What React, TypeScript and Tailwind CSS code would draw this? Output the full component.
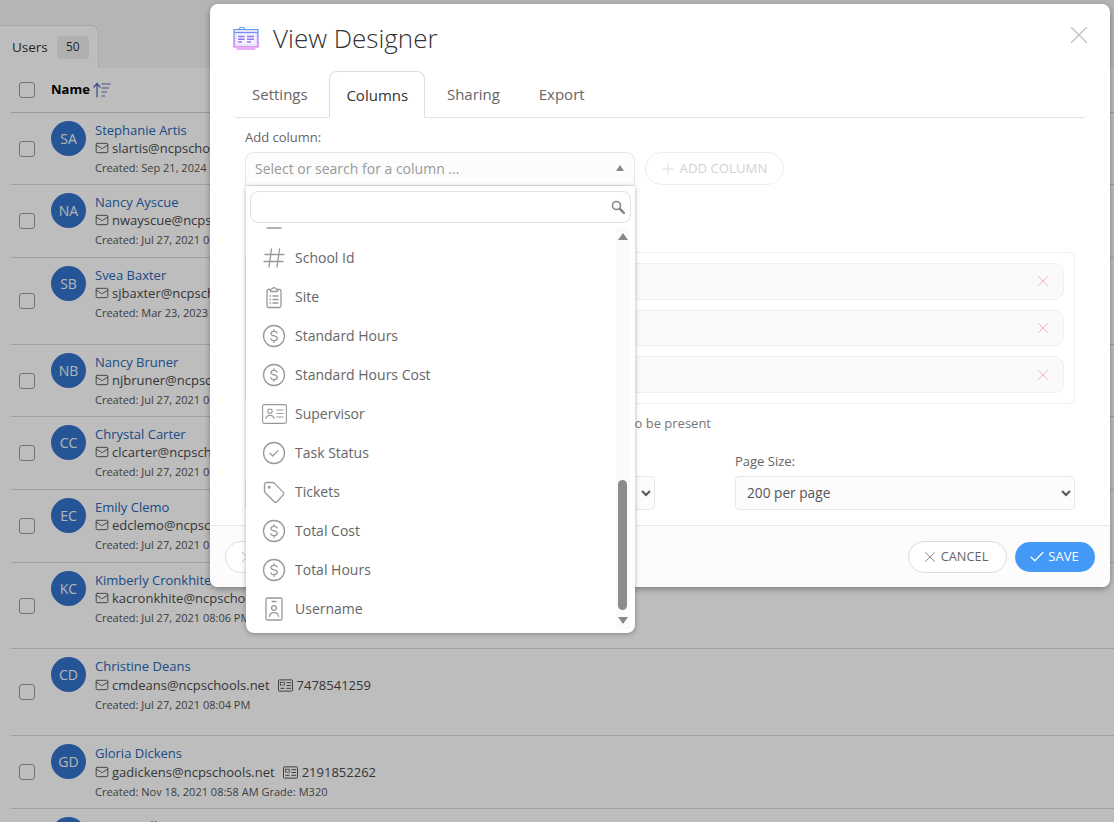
import { useId } from "react";
import { Check, Mail, Plus, X } from "lucide-react";

// ─── Line icons ──────────────────────────────────────────────────────────────

function Ico({ children, className = "" }: { children: React.ReactNode; className?: string }) {
  return (
    <svg
      viewBox="0 0 24 24"
      fill="none"
      stroke="currentColor"
      strokeWidth="1.3"
      strokeLinecap="round"
      strokeLinejoin="round"
      className={`h-6 w-6 text-[#999] ${className}`}
    >
      {children}
    </svg>
  );
}

const HashIcon = () => (
  <Ico>
    <path d="M9.5 3 7 21M17.5 3 15 21M3 8.5h19M2 15.5h19" />
  </Ico>
);

const ClipboardIcon = () => (
  <Ico>
    <path d="M8.5 4.5H6.5a1.5 1.5 0 0 0-1.5 1.5v15a1.5 1.5 0 0 0 1.5 1.5h11a1.5 1.5 0 0 0 1.5-1.5V6a1.5 1.5 0 0 0-1.5-1.5h-2" />
    <path d="M8.5 6.5v-2l2-.8a1.6 1.6 0 0 1 3 0l2 .8v2z" />
    <path d="M11 11h5M11 14.5h5M11 18h5M8 11h.4M8 14.5h.4M8 18h.4" />
  </Ico>
);

const DollarIcon = () => (
  <Ico>
    <circle cx="12" cy="12" r="10.5" />
    <path d="M15.2 9c-.5-1.1-1.7-1.7-3.2-1.7-1.8 0-3.1.9-3.1 2.3 0 3.2 6.4 1.5 6.4 4.7 0 1.4-1.4 2.4-3.3 2.4-1.6 0-2.8-.7-3.3-1.9M12 5.6v1.7M12 16.7v1.7" />
  </Ico>
);

const CardIcon = () => (
  <svg viewBox="0 0 25 20" fill="none" stroke="currentColor" strokeWidth="1.1" className="h-5 w-[25px] text-[#999]">
    <rect x="0.6" y="0.6" width="23.8" height="18.8" rx="1.6" />
    <circle cx="8" cy="7.2" r="2.2" />
    <path d="M3.8 15c.4-2.6 2.2-3.6 4.2-3.6s3.8 1 4.2 3.6M14.5 6h7M14.5 9.5h7M14.5 13h7" />
  </svg>
);

const CheckCircleIcon = () => (
  <Ico>
    <circle cx="12" cy="12" r="10.5" />
    <path d="m8 12.3 2.8 2.7 5.2-5.4" />
  </Ico>
);

const TagIcon = () => (
  <Ico>
    <path d="M2.5 4.5a2 2 0 0 1 2-2h6.3a2 2 0 0 1 1.4.6l9 9a2 2 0 0 1 0 2.8L15 21.7a2 2 0 0 1-2.8 0l-9-9a2 2 0 0 1-.7-1.5z" />
    <circle cx="7.2" cy="7.2" r="0.9" />
  </Ico>
);

const BadgeIcon = () => (
  <Ico>
    <rect x="4" y="1" width="16" height="22" rx="1.6" />
    <path d="M10 4.5h4" />
    <circle cx="12" cy="11" r="2.4" />
    <path d="M7.5 19.5c.2-2.6 2.2-3.8 4.5-3.8s4.3 1.2 4.5 3.8" />
  </Ico>
);

const ClippedIcon = () => (
  <Ico>
    <path d="M5 21h14" />
  </Ico>
);

const SearchIcon = () => (
  <svg viewBox="0 0 14 14" fill="none" stroke="#888" strokeLinecap="round" className="h-[14px] w-[14px]">
    <circle cx="5.5" cy="5.5" r="4" strokeWidth="1.6" />
    <path d="m9 9 3.8 3.8" strokeWidth="2.6" />
  </svg>
);

const PhoneCardIcon = () => (
  <svg viewBox="0 0 16 13" fill="none" stroke="currentColor" strokeWidth="1" className="ml-[8px] mr-[4px] h-[13px] w-[15px] text-[#4a4a4a]">
    <rect x="0.5" y="0.5" width="15" height="12" rx="1" />
    <rect x="2.5" y="3" width="4.5" height="3" strokeWidth="0.8" />
    <path d="M2.5 9.5h4.5M9 3.5h5M9 6.5h5M9 9.5h5" />
  </svg>
);

function DesignerIcon() {
  const id = useId();
  return (
    <svg viewBox="0 0 26 24" className="h-6 w-[26px]" fill="none">
      <defs>
        <linearGradient id={id} x1="0" y1="0" x2="0" y2="1">
          <stop offset="0" stopColor="#5a9df5" />
          <stop offset="1" stopColor="#d65cf0" />
        </linearGradient>
      </defs>
      <path d="M1 3.5h24v17.5H1z" fill="#e4e1fc" stroke={`url(#${id})`} strokeWidth="1.2" />
      <path d="M1 6.5h24M3.5 23h19M6 3.5l1.2-2h3.4l1.2 2" stroke={`url(#${id})`} strokeWidth="1.2" />
      <rect x="3.5" y="8.5" width="19" height="10" fill="#f6f4ff" />
      <path d="M5 10.5h6.5M5 13.2h6.5M5 16h4M14 10.5h7M14 13.2h7M14 16h4" stroke="#8d78ee" strokeWidth="1.6" />
    </svg>
  );
}

function SortIcon() {
  return (
    <svg viewBox="0 0 18 16" className="h-4 w-[18px]" fill="none" strokeWidth="1.2" strokeLinecap="round">
      <path d="M4 15V2M1 5l3-3.5L7 5" stroke="#4d63b5" />
      <path d="M9 2h8M9 6h6.5M9 10h4.5M9 14h2.5" stroke="#6d6ab8" />
    </svg>
  );
}

// ─── Background list ─────────────────────────────────────────────────────────

type User = {
  initials: string;
  name: string;
  email: string;
  created: string;
  phone?: string;
  height: string;
};

const users: User[] = [
  { initials: "SA", name: "Stephanie Artis", email: "slartis@ncpschools.net", created: "Created: Sep 21, 2024 08:15 AM", height: "h-[72px]" },
  { initials: "NA", name: "Nancy Ayscue", email: "nwayscue@ncpschools.net", created: "Created: Jul 27, 2021 08:06 PM", height: "h-[73px]" },
  { initials: "SB", name: "Svea Baxter", email: "sjbaxter@ncpschools.net", created: "Created: Mar 23, 2023 08:15 AM", height: "h-[87px]" },
  { initials: "NB", name: "Nancy Bruner", email: "njbruner@ncpschools.net", created: "Created: Jul 27, 2021 08:06 PM", height: "h-[72px]" },
  { initials: "CC", name: "Chrystal Carter", email: "clcarter@ncpschools.net", created: "Created: Jul 27, 2021 08:06 PM", height: "h-[73px]" },
  { initials: "EC", name: "Emily Clemo", email: "edclemo@ncpschools.net", created: "Created: Jul 27, 2021 08:06 PM", height: "h-[73px]" },
  { initials: "KC", name: "Kimberly Cronkhite", email: "kacronkhite@ncpschools.net", created: "Created: Jul 27, 2021 08:06 PM", height: "h-[86px]" },
  { initials: "CD", name: "Christine Deans", email: "cmdeans@ncpschools.net", phone: "7478541259", created: "Created: Jul 27, 2021 08:04 PM", height: "h-[87px]" },
  { initials: "GD", name: "Gloria Dickens", email: "gadickens@ncpschools.net", phone: "2191852262", created: "Created: Nov 18, 2021 08:58 AM Grade: M320", height: "h-[73px]" },
  { initials: "MD", name: "Maria Dollis", email: "mdollis@ncpschools.net", created: "Created: Jul 27, 2021 08:06 PM", height: "h-[73px]" },
];

function CheckBox() {
  return <span className="h-4 w-4 shrink-0 rounded-[3px] border border-[#9a9a9a] bg-white" />;
}

function UserRow({ user }: { user: User }) {
  return (
    <div className={`flex items-center border-b border-[#d8d8d8] pl-[8px] ${user.height}`}>
      <CheckBox />
      <div className="ml-[16px] flex h-full items-start pt-[8px]">
        <div className="flex h-[35px] w-[35px] items-center justify-center rounded-full bg-[#3373cb] text-[14px] text-[#f4f4f4]">
          {user.initials}
        </div>
        <div className="ml-[9px] text-[13px] leading-[18px] text-[#4a4a4a]">
          <div className="text-[#2766b5]">{user.name}</div>
          <div className={`flex items-center whitespace-nowrap ${user.phone ? "mt-px" : ""}`}>
            <Mail size={14} strokeWidth={1.5} className="mr-[3px] text-[#4a4a4a]" />
            {user.email}
            {user.phone && (
              <>
                <PhoneCardIcon />
                {user.phone}
              </>
            )}
          </div>
          <div className="mt-[3px] whitespace-nowrap text-[11px] leading-[16px] text-[#555]">{user.created}</div>
        </div>
      </div>
    </div>
  );
}

function UsersPage() {
  return (
    <div className="h-[822px] overflow-hidden bg-[#f5f5f5]">
      <div className="h-[25px]" />
      <div className="flex h-[43px] w-[99px] items-center rounded-tr-lg border-r border-t border-[#e4e4e4] bg-white pl-[12px] text-[13.5px] text-[#333]">
        Users
        <span className="ml-[9px] flex h-[23px] w-[32px] items-center justify-center rounded bg-[#eeeeee] text-[12px]">50</span>
      </div>
      <div className="bg-white pl-[11px]">
        <div className="flex h-[45px] items-center border-b border-[#d0d0d0] pl-[8px] text-[13px] font-bold text-black">
          <CheckBox />
          <span className="ml-[16px]">Name</span>
          <span className="ml-[3px]">
            <SortIcon />
          </span>
        </div>
        {users.map((u) => (
          <UserRow key={u.initials} user={u} />
        ))}
      </div>
    </div>
  );
}

// ─── Dropdown ────────────────────────────────────────────────────────────────

const columns: { label: string; icon: React.ReactNode }[] = [
  { label: "School", icon: <ClippedIcon /> },
  { label: "School Id", icon: <HashIcon /> },
  { label: "Site", icon: <ClipboardIcon /> },
  { label: "Standard Hours", icon: <DollarIcon /> },
  { label: "Standard Hours Cost", icon: <DollarIcon /> },
  { label: "Supervisor", icon: <CardIcon /> },
  { label: "Task Status", icon: <CheckCircleIcon /> },
  { label: "Tickets", icon: <TagIcon /> },
  { label: "Total Cost", icon: <DollarIcon /> },
  { label: "Total Hours", icon: <DollarIcon /> },
  { label: "Username", icon: <BadgeIcon /> },
];

function ColumnDropdown() {
  return (
    <div className="absolute left-[1px] top-[34px] z-20 h-[447px] w-[389px] rounded-b-lg bg-white shadow-[0_1px_5px_rgba(0,0,0,0.3)]">
      <div className="relative z-10 bg-white px-[4px] pb-[3px] pt-[5px]">
        <div className="flex h-[32px] items-center justify-end rounded-lg border border-[#e2e2e2] pr-[5px]">
          <SearchIcon />
        </div>
      </div>
      <div className="relative h-[407px] overflow-hidden rounded-b-lg">
        <div className="-mt-[27px]">
          {columns.map((c) => (
            <div key={c.label} className="flex h-[39px] items-center pl-[15px] text-[14px] text-[#666]">
              <span className="flex w-[34px] shrink-0 pl-[1px]">{c.icon}</span>
              {c.label}
            </div>
          ))}
        </div>
        <div className="absolute bottom-[4px] right-[5px] top-[2px] w-[14px] bg-[#fafafa]">
          <span className="absolute left-[2px] top-[5px] h-0 w-0 border-x-[5px] border-b-[7px] border-x-transparent border-b-[#888]" />
          <span className="absolute bottom-[19px] left-[2px] h-[130px] w-[9px] rounded-full bg-[#8c8c8c]" />
          <span className="absolute bottom-[5px] left-[2px] h-0 w-0 border-x-[5px] border-t-[7px] border-x-transparent border-t-[#888]" />
        </div>
      </div>
    </div>
  );
}

// ─── Modal ───────────────────────────────────────────────────────────────────

const tabs = ["Settings", "Columns", "Sharing", "Export"];

function ColumnChip() {
  return (
    <div className="flex h-[37px] items-center justify-end rounded-[10px] border border-[#efefef] bg-[#fafafa] pr-[11px]">
      <X size={18} strokeWidth={1} className="text-[#eaa0a0]" />
    </div>
  );
}

function ViewDesigner() {
  return (
    <div className="absolute left-[210px] top-[4px] flex h-[583px] w-[900px] flex-col rounded-lg bg-white shadow-[0_2px_6px_rgba(0,0,0,0.35)]">
      <div className="flex h-[67px] shrink-0 items-center pl-[23px] pr-[16px]">
        <DesignerIcon />
        <h1 className="ml-[14px] text-[26px] font-light leading-none text-[#333]">View Designer</h1>
        <X size={30} strokeWidth={1} className="-mt-[5px] ml-auto text-[#c0c0c0]" />
      </div>

      <div className="mx-[25px] flex h-[47px] shrink-0 items-end gap-[4.8px] border-b border-[#e3e3e3] text-[15px]">
        {tabs.map((t) =>
          t === "Columns" ? (
            <div key={t} className="-mb-px flex h-[47px] items-center rounded-t-lg border border-b-white border-[#dedede] bg-white px-[16px] pt-[1px] text-[#333]">
              {t}
            </div>
          ) : (
            <div key={t} className="flex h-[47px] items-center border border-transparent px-[16px] pt-[1px] text-[#666]">
              {t}
            </div>
          ),
        )}
      </div>

      <div className="flex-1 px-[35px] pt-[10px] text-[13px] text-[#666]">
        <div className="h-[24px] leading-[18px]">Add column:</div>
        <div className="flex gap-[10px]">
          <div className="relative h-[34px] w-[390px]">
            <div className="flex h-full items-center justify-between rounded-t-lg border border-[#e6e6e6] bg-[#fcfcfc] pb-[2px] pl-[9px] pr-[10px] text-[14px] text-[#999]">
              Select or search for a column ...
              <span className="h-0 w-0 border-x-[4.5px] border-b-[6px] border-x-transparent border-b-[#888]" />
            </div>
            <ColumnDropdown />
          </div>
          <button className="flex h-[33px] w-[139px] items-center justify-center gap-[3px] rounded-full border border-[#eeeeee] pr-[3px] text-[13.2px] text-[#d2d2d2]">
            <Plus size={18} strokeWidth={1} />
            ADD COLUMN
          </button>
        </div>

        <div className="mt-[66px] flex h-[152px] flex-col gap-[10px] rounded border border-[#efefef] p-[10px]">
          <ColumnChip />
          <ColumnChip />
          <ColumnChip />
        </div>
        <div className="mt-[10px] h-[18px] pr-[364px] text-right leading-[18px] text-[#777]">Columns need to be present</div>

        <div className="mt-[20px] flex gap-[80px]">
          <div className="w-[410px]">
            <div className="h-[18px]" />
            <select className="mt-[6px] h-[34px] w-full rounded border border-[#e8e8e8] bg-[#fcfcfd] px-[7px] text-[13.7px] text-[#555]">
              <option>Name</option>
            </select>
          </div>
          <div className="w-[340px]">
            <div className="h-[18px] leading-[18px]">Page Size:</div>
            <select className="mt-[6px] h-[34px] w-full rounded border border-[#e8e8e8] bg-[#fcfcfd] px-[7px] pb-[1px] text-[13.7px] text-[#555]">
              <option>200 per page</option>
            </select>
          </div>
        </div>
      </div>

      <div className="flex h-[62px] shrink-0 items-center rounded-b-lg border-t border-[#e8e8e8] bg-[#fcfcfc] pl-[15px] pr-[15px]">
        <button className="flex h-[32px] w-[90px] items-center justify-start rounded-full border border-[#dedede] bg-white pl-[11px] text-[#bbb]">
          <X size={20} strokeWidth={1} />
        </button>
        <button className="ml-auto flex h-[32px] w-[99px] items-center justify-center gap-[1px] rounded-full border border-[#dcdcdc] bg-white pr-[7px] text-[12.8px] text-[#666]">
          <X size={18} strokeWidth={1} className="mx-px" />
          CANCEL
        </button>
        <button className="ml-[8px] flex h-[30px] w-[80px] items-center justify-center rounded-full bg-[#4499f7] pr-[3px] text-[13px] text-white">
          <Check size={18} strokeWidth={1.6} className="mr-[2px]" />
          SAVE
        </button>
      </div>
    </div>
  );
}

export default function App() {
  return (
    <div className="relative h-[822px] overflow-hidden font-['Open_Sans',sans-serif]">
      <UsersPage />
      <div className="absolute inset-0 bg-black/[0.26]" />
      <ViewDesigner />
    </div>
  );
}
